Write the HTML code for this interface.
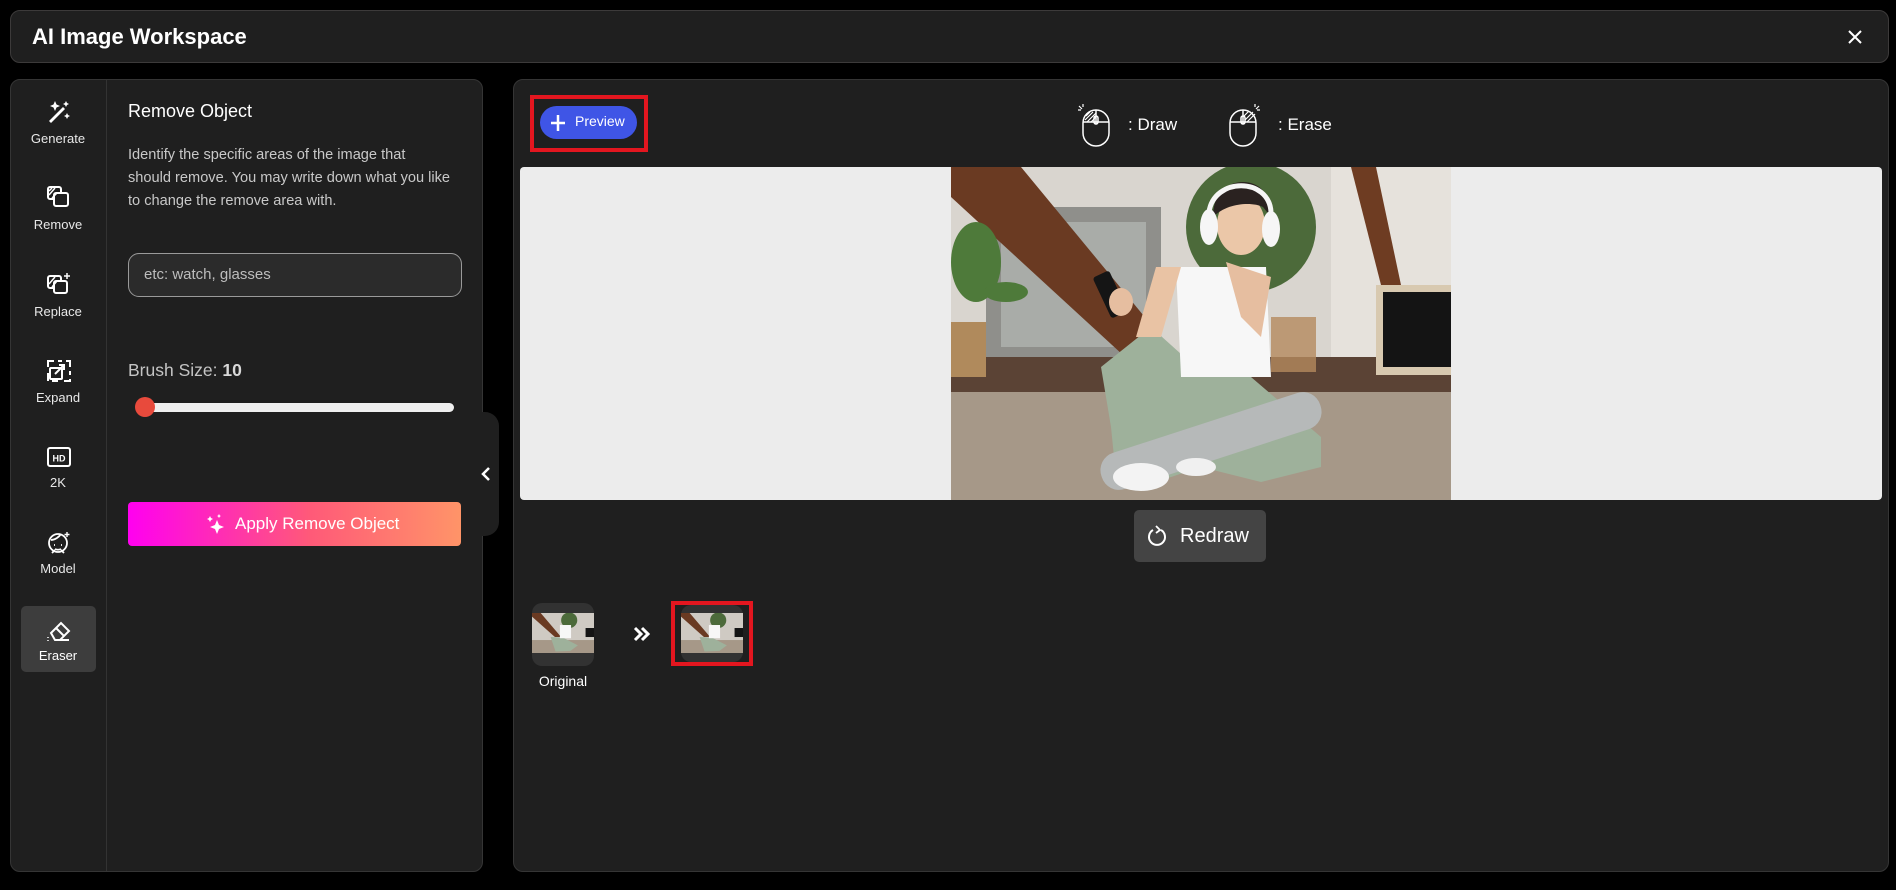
<!DOCTYPE html>
<html><head><meta charset="utf-8"><style>
*{box-sizing:border-box;margin:0;padding:0}
body{width:1896px;height:890px;background:#000;font-family:"Liberation Sans",sans-serif;color:#fff;position:relative;overflow:hidden}
.abs{position:absolute}
.hdr{left:10px;top:10px;width:1879px;height:53px;background:#1f1f1f;border:1px solid #3c3a3a;border-radius:10px}
.panel{background:#1f1f1f;border:1px solid #353535;border-radius:10px}
.lbl{position:absolute;width:96px;left:0;text-align:center;font-size:13px;color:#e8e8e8}
</style></head><body>
<div class="abs hdr"></div>
<div class="abs" style="left:32px;top:24px;font-size:22px;font-weight:bold">AI Image Workspace</div>
<svg class="abs" style="left:1847px;top:29px" width="16" height="16" viewBox="0 0 16 16"><path d="M2 2L14 14M14 2L2 14" stroke="#fff" stroke-width="2"/></svg>

<div class="abs panel" style="left:10px;top:79px;width:473px;height:793px"></div>
<div class="abs" style="left:106px;top:80px;width:1px;height:791px;background:#333"></div>
<div class="abs" style="left:21px;top:606px;width:75px;height:66px;background:#3d3d3d;border-radius:5px"></div>
<div class="abs" style="left:10px;top:0;width:96px;height:890px">
<svg class="abs" style="left:36px;top:99px" width="26" height="26" viewBox="0 0 26 26" fill="#fff"><path d="M3 22L17 8l2 2L5 24z"/><path d="M9 2l1.5 3.5L14 7l-3.5 1.5L9 12 7.5 8.5 4 7l3.5-1.5z"/><path d="M20 2l1 2 2 1-2 1-1 2-1-2-2-1 2-1z"/><path d="M21 14l1 2 2 1-2 1-1 2-1-2-2-1 2-1z"/></svg>
<div class="lbl" style="top:131px">Generate</div>
<svg class="abs" style="left:36px;top:185px" width="26" height="24" viewBox="0 0 26 24" fill="none" stroke="#fff" stroke-width="2"><rect x="2" y="2" width="13" height="12" rx="2"/><rect x="8" y="8" width="14" height="13" rx="2" fill="#1f1f1f"/><path d="M3 10l6-7M3 6l3-3M6 13l5-5" stroke-width="1.5"/></svg>
<div class="lbl" style="top:217px">Remove</div>
<svg class="abs" style="left:36px;top:272px" width="26" height="24" viewBox="0 0 26 24" fill="none" stroke="#fff" stroke-width="2"><rect x="2" y="4" width="13" height="12" rx="2"/><rect x="8" y="9" width="13" height="12" rx="2" fill="#1f1f1f"/><path d="M3 12l6-7M6 15l5-6" stroke-width="1.5"/><path d="M21 1v6M18 4h6" stroke-width="1.5"/></svg>
<div class="lbl" style="top:304px">Replace</div>
<svg class="abs" style="left:36px;top:359px" width="26" height="24" viewBox="0 0 26 24" fill="none" stroke="#fff" stroke-width="2"><path d="M2 8V2h6M12 2h4M20 2h4v6M24 12v4M24 20v2h-6M12 22H6M2 22v-8"/><rect x="4" y="9" width="12" height="11" rx="1"/><path d="M9 15l9-9M13 6h5v5"/></svg>
<div class="lbl" style="top:390px">Expand</div>
<svg class="abs" style="left:36px;top:446px" width="26" height="22" viewBox="0 0 26 22" fill="none" stroke="#fff" stroke-width="2"><rect x="2" y="2" width="22" height="18" rx="2"/><text x="13" y="15.5" font-size="9" font-weight="bold" text-anchor="middle" fill="#fff" stroke="none" font-family="Liberation Sans">HD</text></svg>
<div class="lbl" style="top:475px">2K</div>
<svg class="abs" style="left:36px;top:530px" width="26" height="26" viewBox="0 0 26 26" fill="none" stroke="#fff" stroke-width="1.8"><circle cx="12" cy="13" r="9"/><path d="M5 10c4 0 8-3 10-6M8 15h1M15 15h1M9 19c2 1 4 1 6 0M6 23l3-3M18 23l-3-3"/><path d="M21 2v5M18.5 4.5h5" stroke-width="1.4"/></svg>
<div class="lbl" style="top:561px">Model</div>
<svg class="abs" style="left:35px;top:619px" width="28" height="24" viewBox="0 0 28 24" fill="none" stroke="#fff" stroke-width="2"><path d="M6 14L16 4l8 8-9 9H10z"/><path d="M11 9l8 8M10 21h14"/><path d="M3 18v1M3 21v1" stroke-width="1.5"/></svg>
<div class="lbl" style="top:648px;color:#fff">Eraser</div>
</div>

<div class="abs" style="left:128px;top:101px;font-size:18px">Remove Object</div>
<div class="abs" style="left:128px;top:144px;white-space:nowrap;font-size:14.6px;line-height:23px;color:#c8c8c8">Identify the specific areas of the image that<br>should remove. You may write down what you like<br>to change the remove area with.</div>
<div class="abs" style="left:128px;top:253px;width:334px;height:44px;border:1px solid #9a9a9a;border-radius:11px;background:#2b2b2b;font-size:15px;color:#bdbdbd;padding:12px 0 0 15px">etc: watch, glasses</div>
<div class="abs" style="left:128px;top:360px;font-size:17.5px;color:#c4c4c4">Brush Size: <b style="color:#d8d8d8">10</b></div>
<div class="abs" style="left:136px;top:403px;width:318px;height:9px;background:#efefef;border-radius:5px"></div>
<div class="abs" style="left:135px;top:397px;width:20px;height:20px;background:#e84a3c;border-radius:50%"></div>
<div class="abs" style="left:128px;top:502px;width:333px;height:44px;border-radius:4px;background:linear-gradient(90deg,#ff00f0,#ff5a78 55%,#ff9468)"></div>
<svg class="abs" style="left:206px;top:514px" width="20" height="22" viewBox="0 0 20 22" fill="#fff"><path d="M11 6l2 5 5 2-5 2-2 5-2-5-5-2 5-2z"/><path d="M4 2l1 2 2 1-2 1-1 2-1-2-2-1 2-1z"/><path d="M13 0l.8 1.5L15 2l-1.2.6L13 4l-.8-1.4L11 2l1.2-.5z"/></svg>
<div class="abs" style="left:235px;top:514px;font-size:17px">Apply Remove Object</div>
<div class="abs" style="left:468px;top:412px;width:31px;height:124px;background:#1f1f1f;border-radius:0 14px 14px 0"></div>
<svg class="abs" style="left:480px;top:466px" width="12" height="16" viewBox="0 0 12 16"><path d="M9 2L3 8l6 6" stroke="#fff" stroke-width="2.5" fill="none"/></svg>

<div class="abs panel" style="left:513px;top:79px;width:1376px;height:793px"></div>
<div class="abs" style="left:530px;top:95px;width:118px;height:57px;border:4px solid #e3161f"></div>
<div class="abs" style="left:540px;top:106px;width:97px;height:33px;background:#3f55e6;border-radius:17px"></div>
<svg class="abs" style="left:550px;top:114px" width="16" height="18" viewBox="0 0 16 18"><path d="M8 1v16M1 9h14" stroke="#fff" stroke-width="2.5"/></svg>
<div class="abs" style="left:575px;top:113px;font-size:14px">Preview</div>
<svg class="abs" style="left:1078px;top:104px" width="34" height="44" viewBox="0 0 34 44" fill="none" stroke="#fff" stroke-width="1.5"><rect x="5" y="6" width="26" height="36" rx="13"/><path d="M18 6v14M5 18h26"/><path d="M7 16l8-8M9 18l9-9M13 18l5-5M8 12l4-4" stroke-width="1.2"/><rect x="16" y="12" width="4" height="8" rx="2"/><path d="M1 2l3 3M5 0v3M0 6h3" stroke-width="1.2"/></svg>
<div class="abs" style="left:1128px;top:115px;font-size:17px">: Draw</div>
<svg class="abs" style="left:1226px;top:104px" width="34" height="44" viewBox="0 0 34 44" fill="none" stroke="#fff" stroke-width="1.5"><rect x="4" y="6" width="26" height="36" rx="13"/><path d="M17 6v14M4 18h26"/><path d="M19 16l8-8M21 18l8-8M18 12l5-5" stroke-width="1.2"/><rect x="15" y="12" width="4" height="8" rx="2"/><path d="M33 2l-3 3M29 0v3M34 6h-3" stroke-width="1.2"/></svg>
<div class="abs" style="left:1278px;top:115px;font-size:17px">: Erase</div>

<div class="abs" style="left:520px;top:167px;width:1362px;height:333px;background:#ececec;border-radius:4px"></div>
<svg class="abs" style="left:951px;top:167px" width="500" height="333" viewBox="0 0 500 333" preserveAspectRatio="none">
<rect width="500" height="333" fill="#d9d5cf"/>
<rect x="35" y="40" width="175" height="150" fill="#8f8f8b"/>
<rect x="50" y="55" width="145" height="125" fill="#a9aca8"/>
<rect x="380" y="0" width="120" height="200" fill="#e6e2dc"/>
<polygon points="0,0 70,0 235,200 185,200 0,30" fill="#6a3a22"/>
<polygon points="400,0 425,0 450,118 430,118" fill="#6e3c22"/>
<ellipse cx="300" cy="60" rx="65" ry="65" fill="#4c6a3a"/>
<rect x="0" y="190" width="500" height="40" fill="#5b4335"/>
<rect x="0" y="225" width="500" height="108" fill="#a69888"/>
<rect x="0" y="155" width="35" height="55" fill="#b08a5c"/>
<ellipse cx="25" cy="95" rx="25" ry="40" fill="#4e7a3a"/>
<ellipse cx="55" cy="125" rx="22" ry="10" fill="#4e7a3a"/>
<rect x="425" y="118" width="75" height="90" fill="#d8c9b0"/>
<rect x="432" y="125" width="68" height="75" fill="#141414"/>
<rect x="320" y="150" width="45" height="55" fill="#b48a5e" opacity=".8"/>
<polygon points="150,200 200,160 250,205 300,210 370,270 370,300 310,315 250,300 190,320 165,310 160,260" fill="#9eb19b"/>
<rect x="145" y="255" width="230" height="38" rx="18" fill="#b6b9b9" transform="rotate(-18 260 274)"/>
<ellipse cx="190" cy="310" rx="28" ry="14" fill="#f3f3f3"/>
<ellipse cx="245" cy="300" rx="20" ry="9" fill="#f0f0f0"/>
<polygon points="225,100 315,100 320,210 230,210" fill="#f7f7f7"/>
<polygon points="205,100 230,100 210,170 185,170" fill="#e9c3a4"/>
<polygon points="275,95 320,110 310,170 290,150" fill="#e6bea0"/>
<ellipse cx="290" cy="58" rx="24" ry="30" fill="#ebc7a8"/>
<path d="M262 50c0-25 15-35 30-35s28 10 28 35l-8-10c-10-5-35-5-50 10z" fill="#2a2220"/>
<ellipse cx="258" cy="60" rx="9" ry="18" fill="#f6f6f6"/>
<ellipse cx="320" cy="62" rx="9" ry="18" fill="#f6f6f6"/>
<path d="M258 45c5-35 60-35 62 0" stroke="#f6f6f6" stroke-width="5" fill="none"/>
<rect x="150" y="105" width="18" height="45" rx="3" fill="#151515" transform="rotate(-25 159 127)"/>
<ellipse cx="170" cy="135" rx="12" ry="14" fill="#e6bea0"/>
</svg>

<div class="abs" style="left:1134px;top:510px;width:132px;height:52px;background:#444;border-radius:5px"></div>
<svg class="abs" style="left:1146px;top:524px" width="22" height="24" viewBox="0 0 22 24" fill="none" stroke="#fff" stroke-width="2"><path d="M15 6a8 8 0 1 1-8 0"/><path d="M10 2l4 4-4 3" stroke-width="1.8"/></svg>
<div class="abs" style="left:1180px;top:525px;font-size:20px">Redraw</div>

<div class="abs" style="left:532px;top:603px;width:62px;height:63px;background:#323232;border-radius:10px"></div>
<svg class="abs" style="left:532px;top:613px" width="62" height="40" viewBox="0 0 500 333" preserveAspectRatio="none"><rect width="500" height="333" fill="#cfcac3"/><polygon points="0,0 70,0 235,200 185,200 0,30" fill="#6a3a22"/><ellipse cx="300" cy="60" rx="65" ry="65" fill="#4c6a3a"/><rect y="225" width="500" height="108" fill="#a69888"/><polygon points="150,200 250,205 370,270 310,315 190,320" fill="#9eb19b"/><rect x="225" y="100" width="90" height="110" fill="#f7f7f7"/><rect x="432" y="125" width="68" height="75" fill="#141414"/></svg>
<div class="abs" style="left:532px;top:673px;width:62px;text-align:center;font-size:14px">Original</div>
<svg class="abs" style="left:633px;top:626px" width="18" height="16" viewBox="0 0 18 16"><path d="M2 2l6 6-6 6M9 2l6 6-6 6" stroke="#fff" stroke-width="3" fill="none"/></svg>
<div class="abs" style="left:671px;top:601px;width:82px;height:65px;border:4px solid #e3161f"></div>
<div class="abs" style="left:681px;top:605px;width:62px;height:57px;background:#323232;border-radius:10px"></div>
<svg class="abs" style="left:681px;top:613px" width="62" height="40" viewBox="0 0 500 333" preserveAspectRatio="none"><rect width="500" height="333" fill="#cfcac3"/><polygon points="0,0 70,0 235,200 185,200 0,30" fill="#6a3a22"/><ellipse cx="300" cy="60" rx="65" ry="65" fill="#4c6a3a"/><rect y="225" width="500" height="108" fill="#a69888"/><polygon points="150,200 250,205 370,270 310,315 190,320" fill="#9eb19b"/><rect x="225" y="100" width="90" height="110" fill="#f7f7f7"/><rect x="432" y="125" width="68" height="75" fill="#141414"/></svg>
</body></html>
